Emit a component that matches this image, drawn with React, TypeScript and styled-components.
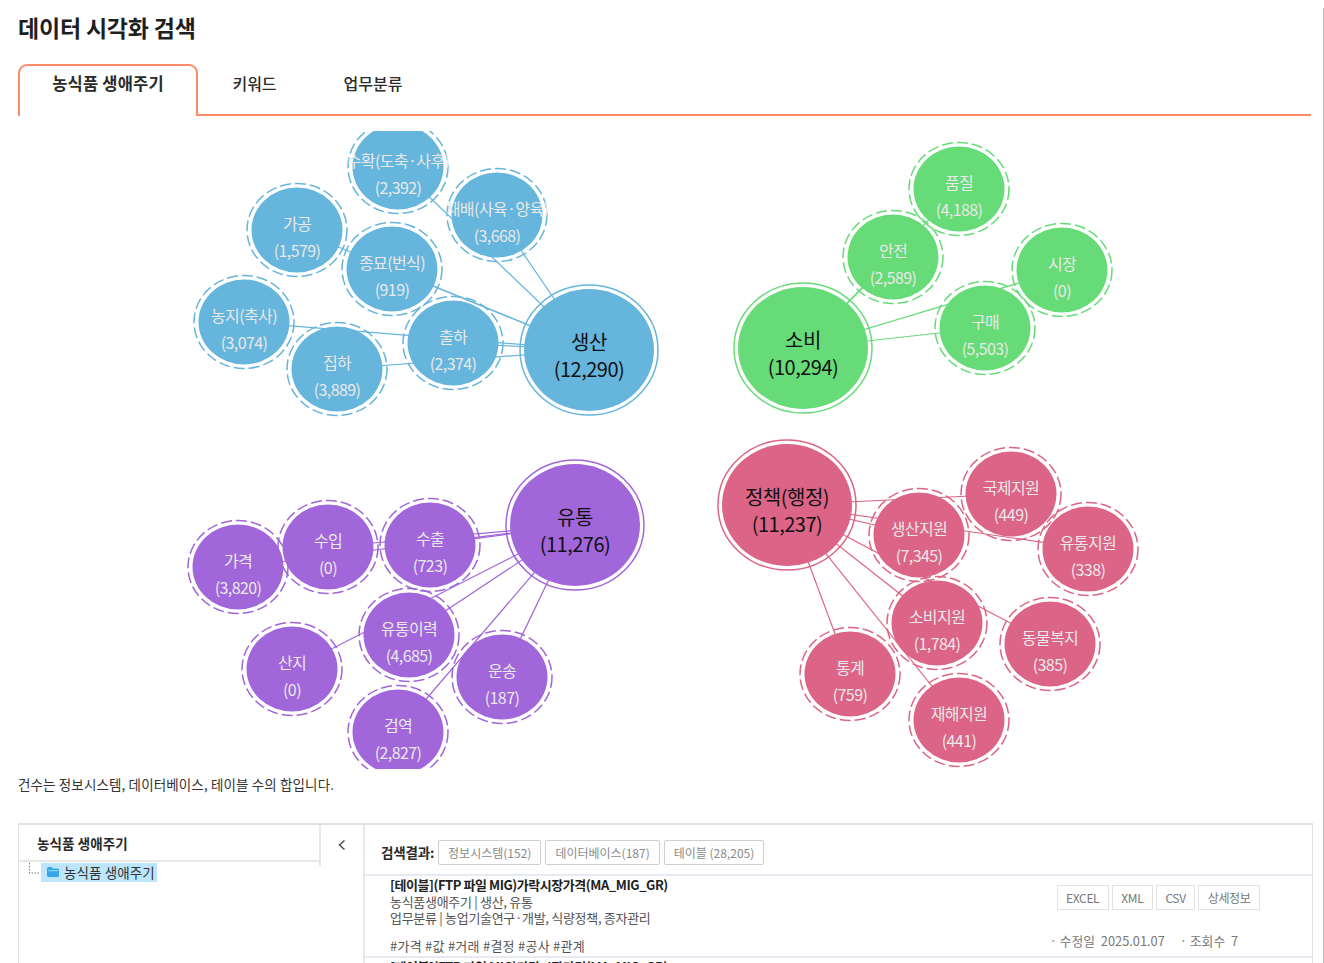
import React from "react";
import styled, { createGlobalStyle } from "styled-components";

const FONT = `"Noto Sans CJK KR", "Noto Sans", sans-serif`;

const GlobalStyle = createGlobalStyle`
  html, body {
    margin: 0;
    padding: 0;
    background: #fff;
    overflow: hidden;
  }
  body {
    font-family: ${FONT};
    color: #222;
  }
`;

const S = {
  Page: styled.div`
    position: relative;
    width: 1324px;
    height: 963px;
    overflow: hidden;
    &::after {
      content: "";
      position: absolute;
      right: 0;
      top: 8px;
      bottom: 0;
      width: 1px;
      background: #c4c4c4;
    }
  `,
  Title: styled.h1`
    margin: 0;
    padding: 11px 0 0 18px;
    height: 52px;
    box-sizing: border-box;
    font-size: 23px;
    line-height: 32px;
    font-weight: 700;
    letter-spacing: -0.2px;
    color: #1f1f1f;
  `,
  Tabs: styled.div`
    display: flex;
    margin: 12px 13px 0 18px;
    height: 52px;
    box-sizing: border-box;
    border-bottom: 2px solid #ff8a65;
  `,
  Tab: styled.div<{ $active?: boolean; $width: number }>`
    width: ${({ $width }) => $width}px;
    height: ${({ $active }) => ($active ? "52px" : "50px")};
    box-sizing: border-box;
    padding-top: ${({ $active }) => ($active ? "6px" : "8px")};
    text-align: center;
    font-size: ${({ $active }) => ($active ? "16.5px" : "16px")};
    line-height: 23px;
    font-weight: ${({ $active }) => ($active ? 700 : 500)};
    letter-spacing: ${({ $active }) => ($active ? "0.2px" : "0")};
    color: #2b2b2b;
    background: #fff;
    border: ${({ $active }) => ($active ? "2px solid #ff8a65" : "0")};
    border-bottom: 0;
    border-radius: ${({ $active }) => ($active ? "9px 9px 0 0" : "0")};
  `,
  Chart: styled.svg`
    display: block;
    margin-top: 15px;
    width: 1324px;
    height: 638px;
  `,
  Note: styled.p`
    margin: 5px 0 0 18px;
    height: 20px;
    font-size: 13.5px;
    line-height: 20px;
    letter-spacing: 0.13px;
    color: #333;
  `,
  Panel: styled.div`
    display: flex;
    margin: 29px 10px 0 18px;
    height: 200px;
    border: 1px solid #e2e2e2;
    border-width: 2px 1px 1px 1px;
    box-sizing: border-box;
    width: 1295px;
  `,
  Side: styled.div`
    width: 302px;
    flex: none;
    box-sizing: border-box;
    border-right: 2px solid #e8e8e8;
    height: 41px;
  `,
  SideHead: styled.div`
    height: 37px;
    box-sizing: border-box;
    padding: 8px 0 0 18px;
    font-size: 13.5px;
    line-height: 20px;
    font-weight: 700;
    letter-spacing: 0.1px;
    color: #2a2a2a;
    border-bottom: 2px solid #e8e8e8;
  `,
  Tree: styled.div`
    display: flex;
    align-items: center;
    height: 20px;
    padding-left: 8px;
  `,
  TreeLabel: styled.span`
    display: flex;
    align-items: center;
    gap: 4px;
    height: 19px;
    padding: 0 2px 0 5px;
    background: #bce6fb;
    font-size: 13.5px;
    letter-spacing: 0.1px;
    color: #333;
  `,
  Toggle: styled.div`
    width: 44px;
    flex: none;
    box-sizing: border-box;
    border-right: 2px solid #e8e8e8;
    display: flex;
    justify-content: center;
    padding-top: 14px;
    color: #555;
  `,
  Main: styled.div`
    flex: 1;
    min-width: 0;
  `,
  SearchRow: styled.div`
    display: flex;
    align-items: center;
    gap: 4px;
    height: 49px;
    box-sizing: border-box;
    padding: 5px 0 0 16px;
  `,
  SearchLabel: styled.strong`
    font-size: 13.5px;
    font-weight: 700;
    letter-spacing: -0.2px;
    color: #2a2a2a;
  `,
  Filter: styled.span`
    display: inline-flex;
    align-items: center;
    justify-content: center;
    box-sizing: border-box;
    height: 25px;
    padding: 0 9px;
    border: 1px solid #cfcfcf;
    border-radius: 2px;
    font-size: 12px;
    letter-spacing: 0;
    color: #8a8a8a;
  `,
  Result: styled.div`
    position: relative;
    height: 82px;
    box-sizing: border-box;
    padding: 0 0 0 25px;
    border-top: 2px solid #e6ebf3;
  `,
  ResultTitle: styled.div`
    font-size: 13px;
    line-height: 18px;
    font-weight: 700;
    letter-spacing: -0.45px;
    color: #222;
  `,
  ResultLine: styled.div`
    font-size: 13px;
    line-height: 16px;
    letter-spacing: -0.3px;
    color: #555;
  `,
  Tags: styled.div`
    margin-top: 12px;
    font-size: 13px;
    line-height: 16px;
    letter-spacing: 0.25px;
    color: #555;
  `,
  Actions: styled.div`
    position: absolute;
    right: 52px;
    top: 9px;
    display: flex;
    gap: 3px;
  `,
  Action: styled.span`
    display: inline-flex;
    align-items: center;
    justify-content: center;
    box-sizing: border-box;
    height: 25px;
    padding: 0 8.5px;
    border: 1px solid #e2e2e2;
    font-size: 12px;
    letter-spacing: -0.35px;
    color: #777;
  `,
  Meta: styled.div`
    position: absolute;
    right: 74px;
    top: 57px;
    display: flex;
    gap: 15px;
    font-size: 12.8px;
    line-height: 16px;
    color: #777;
  `,
  MetaItem: styled.span`
    &::before {
      content: "· ";
    }
  `,
  NodeLabel: styled.text<{ $root?: boolean }>`
    font-family: ${FONT};
    text-anchor: middle;
    dominant-baseline: central;
    font-size: ${({ $root }) => ($root ? "20px" : "16px")};
    letter-spacing: ${({ $root }) => ($root ? "-0.5px" : "-0.6px")};
    fill: ${({ $root }) => ($root ? "#111" : "#e9e9e9")};
  `,
  Ring: styled.ellipse<{ $root?: boolean; $color: string }>`
    fill: none;
    stroke: ${({ $color }) => $color};
    stroke-width: 1.5;
    stroke-dasharray: ${({ $root }) => ($root ? "none" : "11 4")};
  `,
};

type BubbleNode = { label: string; count: string; x: number; y: number };
type Cluster = { color: string; root: BubbleNode; nodes: BubbleNode[] };

const CLUSTERS: Cluster[] = [
  {
    color: "#66b5dc",
    root: { label: "생산", count: "(12,290)", x: 589, y: 350 },
    nodes: [
      { label: "수확(도축·사후)", count: "(2,392)", x: 398, y: 167 },
      { label: "재배(사육·양육)", count: "(3,668)", x: 497, y: 215 },
      { label: "가공", count: "(1,579)", x: 297, y: 230 },
      { label: "종묘(번식)", count: "(919)", x: 392, y: 269 },
      { label: "농지(축사)", count: "(3,074)", x: 244, y: 322 },
      { label: "집하", count: "(3,889)", x: 337, y: 369 },
      { label: "출하", count: "(2,374)", x: 453, y: 343 },
    ],
  },
  {
    color: "#66db77",
    root: { label: "소비", count: "(10,294)", x: 803, y: 348 },
    nodes: [
      { label: "품질", count: "(4,188)", x: 959, y: 189 },
      { label: "안전", count: "(2,589)", x: 893, y: 257 },
      { label: "시장", count: "(0)", x: 1062, y: 270 },
      { label: "구매", count: "(5,503)", x: 985, y: 328 },
    ],
  },
  {
    color: "#a166da",
    root: { label: "유통", count: "(11,276)", x: 575, y: 525 },
    nodes: [
      { label: "가격", count: "(3,820)", x: 238, y: 567 },
      { label: "수입", count: "(0)", x: 328, y: 547 },
      { label: "수출", count: "(723)", x: 430, y: 545 },
      { label: "유통이력", count: "(4,685)", x: 409, y: 635 },
      { label: "산지", count: "(0)", x: 292, y: 669 },
      { label: "운송", count: "(187)", x: 502, y: 677 },
      { label: "검역", count: "(2,827)", x: 398, y: 732 },
    ],
  },
  {
    color: "#dc6487",
    root: { label: "정책(행정)", count: "(11,237)", x: 787, y: 505 },
    nodes: [
      { label: "국제지원", count: "(449)", x: 1011, y: 494 },
      { label: "생산지원", count: "(7,345)", x: 919, y: 535 },
      { label: "유통지원", count: "(338)", x: 1088, y: 549 },
      { label: "소비지원", count: "(1,784)", x: 937, y: 623 },
      { label: "동물복지", count: "(385)", x: 1050, y: 644 },
      { label: "통계", count: "(759)", x: 850, y: 674 },
      { label: "재해지원", count: "(441)", x: 959, y: 720 },
    ],
  },
];

// the bubbles are a little wider than tall in the picture
const Bubble: React.FC<{ node: BubbleNode; color: string; root?: boolean }> = ({
  node,
  color,
  root,
}) => {
  const labelY = root ? node.y - 9 : node.y - 7;
  const countY = root ? node.y + 18 : node.y + 20;
  return (
    <g>
      <ellipse
        cx={node.x}
        cy={node.y}
        rx={root ? 65 : 45.5}
        ry={root ? 61 : 42.5}
        fill={color}
      />
      <S.Ring
        cx={node.x}
        cy={node.y}
        rx={root ? 69 : 50}
        ry={root ? 65 : 46.5}
        $color={color}
        $root={root}
      />
      <S.NodeLabel x={node.x} y={labelY} $root={root}>
        {node.label}
      </S.NodeLabel>
      <S.NodeLabel x={node.x} y={countY} $root={root}>
        {node.count}
      </S.NodeLabel>
    </g>
  );
};

const ClusterGroup: React.FC<{ cluster: Cluster }> = ({ cluster }) => {
  const { color, root, nodes } = cluster;
  return (
    <g>
      {nodes.map((node) => (
        <line
          key={node.label}
          x1={root.x}
          y1={root.y}
          x2={node.x}
          y2={node.y}
          stroke={color}
          strokeWidth={1.2}
        />
      ))}
      {nodes.map((node) => (
        <Bubble key={node.label} node={node} color={color} />
      ))}
      <Bubble node={root} color={color} root />
    </g>
  );
};

const ResultItem: React.FC = () => (
  <S.Result>
    <S.ResultTitle>[테이블](FTP 파일 MIG)가락시장가격(MA_MIG_GR)</S.ResultTitle>
    <S.ResultLine>농식품생애주기 | 생산, 유통</S.ResultLine>
    <S.ResultLine>업무분류 | 농업기술연구·개발, 식량정책, 종자관리</S.ResultLine>
    <S.Tags>#가격 #값 #거래 #결정 #공사 #관계</S.Tags>
    <S.Actions>
      <S.Action>EXCEL</S.Action>
      <S.Action>XML</S.Action>
      <S.Action>CSV</S.Action>
      <S.Action>상세정보</S.Action>
    </S.Actions>
    <S.Meta>
      <S.MetaItem>수정일&nbsp; 2025.01.07</S.MetaItem>
      <S.MetaItem>조회수&nbsp; 7</S.MetaItem>
    </S.Meta>
  </S.Result>
);

const App: React.FC = () => (
  <S.Page>
    <GlobalStyle />
    <S.Title>데이터 시각화 검색</S.Title>
    <S.Tabs>
      <S.Tab $active $width={180}>
        농식품 생애주기
      </S.Tab>
      <S.Tab $width={113}>키워드</S.Tab>
      <S.Tab $width={124}>업무분류</S.Tab>
    </S.Tabs>
    <S.Chart viewBox="0 131 1324 638">
      {CLUSTERS.map((cluster) => (
        <ClusterGroup key={cluster.root.label} cluster={cluster} />
      ))}
    </S.Chart>
    <S.Note>건수는 정보시스템, 데이터베이스, 테이블 수의 합입니다.</S.Note>
    <S.Panel>
      <S.Side>
        <S.SideHead>농식품 생애주기</S.SideHead>
        <S.Tree>
          <svg width="14" height="18" viewBox="0 0 14 18">
            <path d="M2.5 0V10H13" fill="none" stroke="#777" strokeDasharray="1.5 1.5" />
          </svg>
          <S.TreeLabel>
            <svg width="14" height="12" viewBox="0 0 14 12">
              <path d="M1 2.5 A1.5 1.5 0 0 1 2.5 1H5.5L7 2.5H11.5A1.5 1.5 0 0 1 13 4V9.5A1.5 1.5 0 0 1 11.5 11H2.5A1.5 1.5 0 0 1 1 9.5Z" fill="#35a7e8" />
              <rect x="2.2" y="4.2" width="9.6" height="1" fill="#a9dcf8" />
            </svg>
            농식품 생애주기
          </S.TreeLabel>
        </S.Tree>
      </S.Side>
      <S.Toggle>
        <svg width="10" height="12" viewBox="0 0 10 12">
          <path d="M7.5 1.5 2.5 6l5 4.5" fill="none" stroke="#555" strokeWidth="1.6" />
        </svg>
      </S.Toggle>
      <S.Main>
        <S.SearchRow>
          <S.SearchLabel>검색결과:</S.SearchLabel>
          <S.Filter>정보시스템(152)</S.Filter>
          <S.Filter>데이터베이스(187)</S.Filter>
          <S.Filter>테이블 (28,205)</S.Filter>
        </S.SearchRow>
        <ResultItem />
        <ResultItem />
      </S.Main>
    </S.Panel>
  </S.Page>
);

export default App;
